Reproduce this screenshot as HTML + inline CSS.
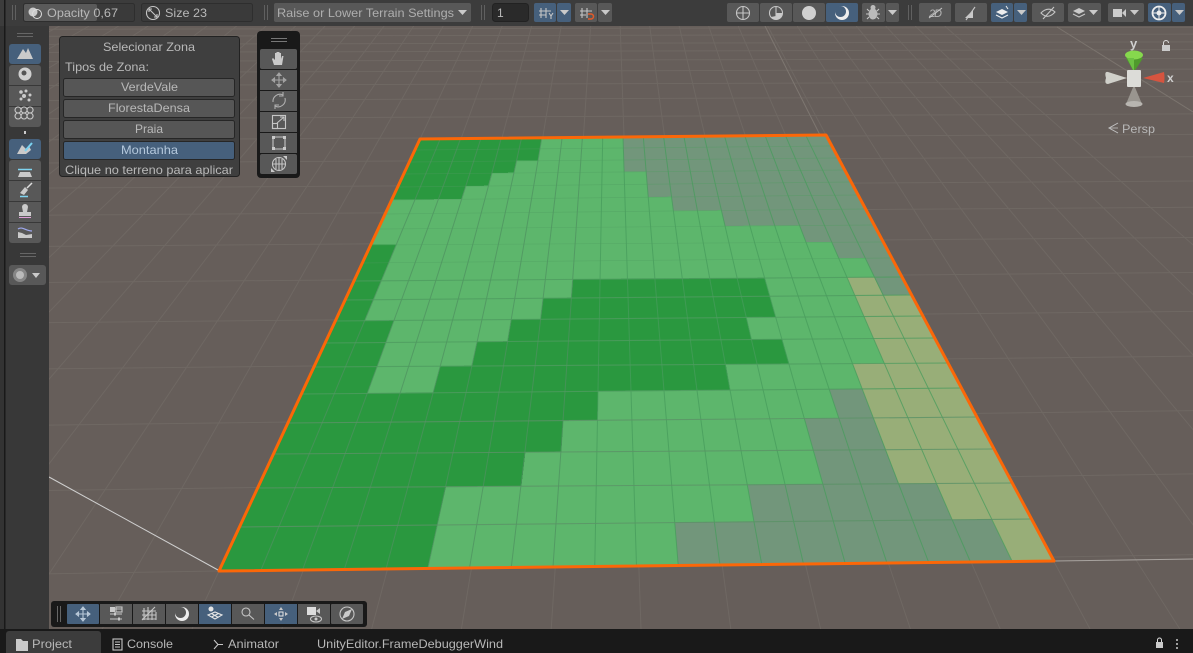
<!DOCTYPE html>
<html><head><meta charset="utf-8"><style>
html,body{margin:0;padding:0;background:#665e5a;width:1193px;height:653px;overflow:hidden}
svg{display:block;position:absolute;left:0;top:0}
text{font-family:"Liberation Sans",sans-serif;font-size:12px;fill:#b8b8b8}
.i{fill:none;stroke:#c6c6c6;stroke-width:1.1}
.f{fill:#cacaca;stroke:none}
</style></head><body>
<svg id="s" width="1193" height="653" viewBox="0 0 1193 653" xmlns="http://www.w3.org/2000/svg">
<rect width="1193" height="653" fill="#665e5a"/>
<g id="bg"></g>
<path d="M49 477L218 570" stroke="#cfcfcf" stroke-width="1" fill="none"/>
<path d="M1054 561L1193 559" stroke="#a8a39f" stroke-width="1" fill="none"/>
<path d="M765 26L820 135" stroke="#7d7670" stroke-width="1" fill="none"/>
<path d="M1057 27L1193 112" stroke="#7b746e" stroke-width="1" fill="none"/>
<g id="t" shape-rendering="crispEdges"></g>
<g id="l"></g>
<path d="M420 139L826 135L1054 561L219 571Z" fill="none" stroke="#fb6708" stroke-width="3" stroke-linejoin="round"/>

<!-- left strip -->
<rect x="0" y="0" width="49" height="629" fill="#383838"/>
<rect x="0" y="0" width="4" height="629" fill="#333"/>
<rect x="4" y="0" width="1.5" height="629" fill="#191919"/>
<path d="M17 33.5H33M17 36.5H33" stroke="#666" stroke-width="1"/>
<rect x="9" y="44" width="32" height="20" rx="3" fill="#46607c"/>
<rect x="9" y="65" width="32" height="62" rx="3" fill="#585858"/>
<path d="M9 85.5H41M9 106.5H41" stroke="#383838"/>
<rect x="24" y="131" width="2" height="3" fill="#ccc"/>
<rect x="9" y="139" width="32" height="20" rx="3" fill="#46607c"/>
<rect x="9" y="160" width="32" height="83" rx="3" fill="#585858"/>
<path d="M9 180.500H41M9 201.500H41M9 222.500H41" stroke="#383838"/>
<path d="M20 253.500H36M20 256.500H36" stroke="#666"/>
<rect x="9" y="265" width="37" height="20" rx="3" fill="#585858"/>
<circle cx="20" cy="275" r="7" fill="#a5a5a5" opacity=".6"/><circle cx="20" cy="275" r="4" fill="#c8c8c8" opacity=".8"/>
<path d="M32 273H40L36 278Z" class="f"/>
<path class="f" d="M17 59L23 49L26 53L28 48L33 59Z"/>
<circle cx="25" cy="74" r="6.500" fill="#d0d0d0"/><circle cx="24" cy="73" r="2.500" fill="#555"/>
<g class="f"><circle cx="21" cy="92" r="1.800"/><circle cx="26" cy="91" r="1.500"/><circle cx="30" cy="95" r="1.500"/><circle cx="24" cy="96" r="2"/><circle cx="29" cy="100" r="1.500"/><circle cx="21" cy="99" r="1.500"/></g>
<path class="i" stroke-width="1" d="M19 114a3 3 0 1 1 0.100 0zM25 114a3 3 0 1 1 .1 0zM31 114a3 3 0 1 1 .1 0zM19 120a3 3 0 1 1 .1 0zM25 120a3 3 0 1 1 .1 0zM31 120a3 3 0 1 1 .1 0z" transform="translate(-1 -1)"/>
<path class="f" d="M17 154L22 145L26 149L29 146L31 150L26 154Z"/>
<path d="M32 143L25 151" stroke="#7ad2f0" stroke-width="2"/>
<path d="M18 169.500H32" stroke="#7fd4f0" stroke-width="1.500"/><path class="f" d="M18 177L20 172H30L32 177Z"/>
<path class="f" d="M20 193L25 187L28 190L24 195Z"/><path d="M27 188L32 183" stroke="#ddd" stroke-width="1.500"/><path d="M20 196.500H28" stroke="#7fd4f0" stroke-width="1.500"/>
<path class="f" d="M22 207a3 3 0 1 1 6 0L27 212H31V216H19V212H23Z"/><path d="M19 217.500H31" stroke="#e0a0d8" stroke-width="1"/>
<path d="M18 229C22 226 26 231 32 231" stroke="#9ea8ee" fill="none" stroke-width="1.200"/><path class="f" d="M18 238V232L22 233L26 235L32 234V238Z"/>

<!-- top toolbar -->
<rect x="0" y="0" width="1193" height="26" fill="#3c3c3c"/>
<rect x="4" y="0" width="1.500" height="26" fill="#191919"/>
<path d="M12.500 5V20M15.500 5V20M264.500 5V20M267.500 5V20M481.500 5V20M484.500 5V20M908.500 5V20M911.500 5V20" stroke="#606060"/>
<rect x="23.500" y="3.500" width="111" height="18" rx="2" fill="#3a3a3a" stroke="#2e2e2e"/>
<rect x="24" y="4" width="73" height="17" rx="2" fill="#5a5a5a"/>
<circle cx="33" cy="12" r="4.500" fill="#ccc"/><circle cx="37" cy="14" r="4.500" fill="none" stroke="#ddd"/>
<text x="47" y="17" textLength="71" lengthAdjust="spacingAndGlyphs">Opacity 0,67</text>
<rect x="141.500" y="3.500" width="111" height="18" rx="2" fill="#3a3a3a" stroke="#2e2e2e"/>
<circle cx="153" cy="13" r="6.500" class="i"/><path class="i" d="M149 9L157 17M149 9H152M149 9V12M157 17H154M157 17V14"/>
<text x="165" y="17" textLength="42" lengthAdjust="spacingAndGlyphs">Size 23</text>
<rect x="274" y="3" width="197" height="19" rx="2" fill="#585858"/>
<text x="277" y="17" textLength="177" lengthAdjust="spacingAndGlyphs" style="fill:#aeaeae">Raise or Lower Terrain Settings</text>
<path d="M458 10H467L462.500 15Z" class="f"/>
<rect x="492.500" y="3.500" width="36" height="18" rx="3" fill="#2a2a2a" stroke="#222"/>
<text x="497" y="17">1</text>
<rect x="534" y="3" width="22" height="19" rx="2" fill="#46607c"/><rect x="557" y="3" width="14" height="19" rx="2" fill="#46607c"/>
<path class="i" d="M541 8V18M546 8V18M539 11H551M539 15H546M549 13L551 16L553 13M551 16V19"/>
<path d="M560 10H569L564.500 15Z" class="f"/>
<rect x="575" y="3" width="22" height="19" rx="2" fill="#585858"/><rect x="598" y="3" width="14" height="19" rx="2" fill="#585858"/>
<path class="i" stroke="#bbb" d="M582 8V18M587 8V18M580 11H592M580 15H586"/>
<path d="M588 19H591A2.500 2.500 0 0 0 591 14H588" fill="none" stroke="#e65a28" stroke-width="1.500"/>
<path d="M601 10H610L605.500 15Z" class="f"/>

<rect x="727" y="3" width="32" height="19" rx="2" fill="#585858"/><rect x="760" y="3" width="32" height="19" rx="2" fill="#585858"/><rect x="793" y="3" width="32" height="19" rx="2" fill="#585858"/><rect x="826" y="3" width="32" height="19" rx="2" fill="#46607c"/>
<circle cx="743" cy="13" r="6.500" class="i"/><path class="i" d="M736.500 13H749.500M743 6.500V19.500"/>
<circle cx="776" cy="13" r="6.500" class="i"/><path class="f" d="M776 13H782A6 6 0 0 1 771 17L776 16Z"/><path class="i" d="M776 6.500V19"/>
<circle cx="809" cy="13" r="7" fill="#d0d0d0"/>
<circle cx="842" cy="13" r="7" fill="#eee"/><circle cx="840.500" cy="11.500" r="5.500" fill="#46607c"/>
<rect x="862" y="3" width="23" height="19" rx="2" fill="#585858"/><rect x="886" y="3" width="13" height="19" rx="2" fill="#585858"/>
<ellipse cx="873" cy="14" rx="4.500" ry="5.500" fill="#bbb"/><circle cx="873" cy="7.500" r="2.500" fill="#bbb"/><path class="i" stroke="#bbb" d="M867 9L869 11M879 9L877 11M866 14H869M880 14H877M867 19L869 17M879 19L877 17"/>
<path d="M888 10H897L892.500 15Z" class="f"/>
<rect x="919" y="3" width="32" height="19" rx="2" fill="#585858"/><rect x="955" y="3" width="32" height="19" rx="2" fill="#585858"/>
<text x="929" y="17" textLength="13" style="font-size:11px;font-style:italic">2D</text><path class="i" d="M929 18L942 8"/>
<path class="f" d="M965 18L973 10V18Z"/><path class="i" d="M966 20L975 7"/>
<rect x="991" y="3" width="22" height="19" rx="2" fill="#46607c"/><rect x="1014" y="3" width="13" height="19" rx="2" fill="#46607c"/>
<path style="fill:#eee" d="M996 12L1002 9L1008 12L1002 15Z"/><path class="i" style="stroke:#eee" d="M996 15L1002 18L1008 15"/><path d="M1006 6L1008 9" stroke="#eee"/>
<path d="M1017 10H1026L1021.500 15Z" class="f"/>
<rect x="1032" y="3" width="32" height="19" rx="2" fill="#585858"/>
<path class="i" stroke="#bbb" d="M1041 13Q1048 6 1055 12Q1048 20 1041 13ZM1043 19L1054 7"/>
<rect x="1068" y="3" width="33" height="19" rx="2" fill="#585858"/>
<path class="f" d="M1073 11L1079 8L1085 11L1079 14Z"/><path class="i" d="M1073 14L1079 17L1085 14"/>
<path d="M1089 10H1098L1093.500 15Z" class="f"/>
<rect x="1108" y="3" width="36" height="19" rx="2" fill="#585858"/>
<rect x="1113" y="9" width="9" height="8" fill="#ccc"/><path class="f" d="M1122 13L1126 9V17Z"/>
<path d="M1130 10H1139L1134.500 15Z" class="f"/>
<rect x="1148" y="3" width="23" height="19" rx="2" fill="#46607c"/><rect x="1172" y="3" width="13" height="19" rx="2" fill="#46607c"/>
<circle cx="1159" cy="13" r="6.500" fill="none" stroke="#eee" stroke-width="1.800"/><path d="M1152 13H1166M1159 6V20" stroke="#eee"/><circle cx="1159" cy="13" r="2.500" fill="#eee"/>
<path d="M1175 10H1184L1179.500 15Z" class="f"/>

<!-- window -->
<rect x="59.500" y="36.500" width="180" height="140" rx="3" fill="#3f3f3f" stroke="#222"/>
<text x="103" y="51" textLength="92" lengthAdjust="spacingAndGlyphs">Selecionar Zona</text>
<text x="65" y="71" textLength="84" lengthAdjust="spacingAndGlyphs">Tipos de Zona:</text>
<g stroke="#262626">
<rect x="63.500" y="78.500" width="171" height="18" rx="2" fill="#565656"/>
<rect x="63.500" y="99.500" width="171" height="18" rx="2" fill="#565656"/>
<rect x="63.500" y="120.500" width="171" height="18" rx="2" fill="#565656"/>
<rect x="63.500" y="141.500" width="171" height="18" rx="2" fill="#46607c"/>
</g>
<text x="121" y="91" textLength="57" lengthAdjust="spacingAndGlyphs">VerdeVale</text>
<text x="108" y="112" textLength="82" lengthAdjust="spacingAndGlyphs">FlorestaDensa</text>
<text x="135" y="133" textLength="28" lengthAdjust="spacingAndGlyphs">Praia</text>
<text x="121" y="154" textLength="57" lengthAdjust="spacingAndGlyphs" style="fill:#b4c8dc">Montanha</text>
<text x="65" y="174" textLength="168" lengthAdjust="spacingAndGlyphs">Clique no terreno para aplicar</text>

<!-- tools overlay -->
<rect x="257" y="31" width="43" height="147" rx="4" fill="#191919"/>
<path d="M271 38.500H287M271 41.500H287" stroke="#777"/>
<g fill="#585858">
<rect x="260" y="49" width="37" height="20" rx="2"/><rect x="260" y="70" width="37" height="20"/><rect x="260" y="91" width="37" height="20"/><rect x="260" y="112" width="37" height="20"/><rect x="260" y="133" width="37" height="20"/><rect x="260" y="154" width="37" height="20" rx="2"/>
</g>
<path class="f" d="M274 65L272 59L273 58L275 60V53H276.500V58V52H278V58V52H279.500V58V53H281V59L282 56H283.500L282 65Z"/>
<path class="i" style="stroke:#a4a4a4" d="M279 73V87M272 80H286M279 73L277 75.500H281ZM279 87L277 84.500H281ZM272 80L274.500 78V82ZM286 80L283.500 78V82Z"/>
<path class="i" style="stroke:#b0b0b0" d="M273 102A7 7 0 0 1 283 95M285 98A7 7 0 0 1 275 106M283 92V96H279M275 109V105H279"/>
<rect x="272.500" y="115.500" width="13" height="13" class="i"/><rect x="272.500" y="123.500" width="5" height="5" class="i"/><path class="i" d="M277 123L284 117M280 117H284V121"/>
<path class="i" d="M274 137H284M274 149H284M273 138V148M285 138V148"/><g class="f"><rect x="272" y="136" width="3" height="3"/><rect x="283" y="136" width="3" height="3"/><rect x="272" y="147" width="3" height="3"/><rect x="283" y="147" width="3" height="3"/></g>
<circle cx="279" cy="164" r="6.500" class="i"/><path class="i" d="M279 158V170M273 164H285M276 159V169M282 159V169"/><path class="f" d="M271 172L275 172L271 168ZM287 156L283 156L287 160Z"/>

<!-- gizmo -->
<path d="M1126 58 L1143 58 L1134 72 Z" fill="#4f9a2c"/>
<ellipse cx="1134" cy="55" rx="9" ry="4.500" fill="#86d84d"/>
<path d="M1127 58L1134 72L1134 58Z" fill="#6cc043"/>
<path d="M1106 78Q1104 71 1108 72L1127 78L1108 84Q1104 84 1106 78Z" fill="#d0d0ca"/>
<path d="M1164 72L1143 78L1164 83Q1165 78 1164 72Z" fill="#d6543f"/>
<path d="M1134 85L1126 104H1142Z" fill="#99958f"/><ellipse cx="1134" cy="104" rx="8.500" ry="3" fill="#b8b5b0"/>
<rect x="1127" y="70" width="14" height="17" rx="1" fill="#dcdcd8"/>
<text x="1130" y="48" style="font-size:13px;font-weight:bold;fill:#d0d0d0" textLength="9">y</text>
<text x="1167" y="82" style="font-size:12px;font-weight:bold;fill:#d0d0d0">x</text>
<path class="f" d="M1162 45H1170V51H1162Z"/><path d="M1163.500 45V43A2.500 2.500 0 0 1 1168.500 43" fill="none" stroke="#ddd"/>
<path d="M1118 123L1109 128L1118 133" fill="none" stroke="#c0c0c0" stroke-width="1"/>
<path d="M1109 128H1118" stroke="#c0c0c0" stroke-width=".8"/>
<text x="1122" y="133" textLength="33" lengthAdjust="spacingAndGlyphs">Persp</text>

<!-- bottom overlay -->
<rect x="51" y="601" width="316" height="26" rx="3" fill="#191919"/>
<path d="M57.500 606V622M60.500 606V622" stroke="#666"/>
<g>
<rect x="67" y="604" width="32" height="20" rx="1" fill="#46607c"/><rect x="100" y="604" width="32" height="20" fill="#585858"/><rect x="133" y="604" width="32" height="20" fill="#585858"/><rect x="166" y="604" width="32" height="20" fill="#585858"/><rect x="199" y="604" width="32" height="20" fill="#46607c"/><rect x="232" y="604" width="32" height="20" fill="#585858"/><rect x="265" y="604" width="32" height="20" fill="#46607c"/><rect x="298" y="604" width="32" height="20" fill="#585858"/><rect x="331" y="604" width="32" height="20" rx="1" fill="#585858"/>
</g>
<path class="i" style="stroke:#b8c8d8" d="M83 607V621M76 614H90M83 607L81 609.500H85ZM83 621L81 618.500H85ZM76 614L78.500 612V616ZM90 614L87.500 612V616Z"/>
<g><rect x="110" y="607" width="5" height="5" class="f"/><path class="i" d="M110 609H122M110 614H122M110 619H122"/><rect x="116" y="607" width="6" height="5" class="i"/><rect x="114" y="612.500" width="2" height="3" class="f"/><rect x="118" y="617.500" width="2" height="3" class="f"/></g>
<path class="i" d="M144 608V620M148 607V620M152 610V620M156 612V620M142 611H156M142 615H156M142 619H156M142 620L155 607" stroke-width="1"/>
<circle cx="182" cy="614" r="7" fill="#eee"/><circle cx="180.500" cy="612.500" r="5.500" fill="#585858"/>
<circle cx="211" cy="609" r="2.500" fill="#e6e6e6"/><path class="i" style="stroke:#e6e6e6" d="M208 615L215 612L222 615L215 619ZM211.500 613.500L218.500 617.500M218.500 613.500L211.500 617"/>
<circle cx="246" cy="612" r="4" class="i"/><path class="i" d="M249 615L254 619.500"/>
<rect x="279" y="612" width="4" height="4" fill="none" stroke="#e6e6e6"/><path class="f" d="M281 607L279 610H283ZM281 621L279 618H283ZM274 614L277 612V616ZM288 614L285 612V616Z"/>
<rect x="307" y="607" width="9" height="8" fill="#ddd"/><path class="f" d="M316 611L320 608V614Z"/><ellipse cx="316" cy="619" rx="5.500" ry="3" class="i"/><circle cx="316" cy="619" r="1.500" class="f"/>
<circle cx="347" cy="614" r="7" class="i"/><path class="f" d="M352 609L349 616L342 619L345 612Z"/>

<!-- tabs -->
<rect x="0" y="629" width="1193" height="24" fill="#191919"/>
<path d="M6 653V634a3 3 0 0 1 3-3H98a3 3 0 0 1 3 3V653Z" fill="#3c3c3c"/>
<path class="f" d="M16 639H21L23 641H28V651H16Z"/>
<text x="32" y="648" textLength="40" lengthAdjust="spacingAndGlyphs">Project</text>
<rect x="113" y="639" width="9" height="11" class="i"/><path class="i" d="M115 642H120M115 644.500H120M115 647H120" stroke-width="1"/>
<text x="127" y="648" textLength="46" lengthAdjust="spacingAndGlyphs">Console</text>
<path class="i" d="M214 640L218 644.500L214 649M218 644.500H223"/>
<text x="228" y="648" textLength="51" lengthAdjust="spacingAndGlyphs">Animator</text>
<text x="317" y="648" textLength="186" lengthAdjust="spacingAndGlyphs">UnityEditor.FrameDebuggerWind</text>
<rect x="1156" y="642" width="7" height="6" class="f"/><path d="M1157.500 642V640A2 2 0 0 1 1161.500 640V642" fill="none" stroke="#ddd"/>
<g class="f"><circle cx="1177" cy="640" r="1"/><circle cx="1177" cy="644" r="1"/><circle cx="1177" cy="648" r="1"/></g>
</svg>
<script>
var L=[139,150,162,174,187,200,214,229,245,263,281,300,321,343,367,394,423,454,488,527,571];
var R=[135,146,158,170,182,195,209,225,242,258,277,295,316,338,363,388,417,449,483,519,561];
var M=[
"DDDDDDLLLLGGGGGGGGGG",
"DDDDDDLLLLGGGGGGGGGG",
"DDDDDLLLLLGGGGGGGGGG",
"DDDDLLLLLLLGGGGGGGGG",
"DDDLLLLLLLLGGGGGGGGG",
"LLLLLLLLLLLLGGGGGGGG",
"LLLLLLLLLLLLLLGGGGGG",
"LLLLLLLLLLLLLLLLLGGG",
"DLLLLLLLLLLLLLLLLLGG",
"DLLLLLLLLLLLLLLLLLLG",
"DLLLLLLLDDDDDDDLLLSG",
"DLLLLLLDDDDDDDDLLLSS",
"DDLLLLDDDDDDDDLLLLSS",
"DDLLLDDDDDDDDDDLLLSS",
"DDLLDDDDDDDDDLLLLSSS",
"DDDDDDDDDLLLLLLLGSSS",
"DDDDDDDDLLLLLLLGGSSS",
"DDDDDDDLLLLLLLLGGSSS",
"DDDDDLLLLLLLLGGGGGSS",
"DDDDDLLLLLLGGGGGGGGS"];
var C={D:"#2a983f",L:"#5db66c",G:"#72967b",S:"#98ae78"};
function p(c,r){var yl=L[r],yr=R[r];var xl=420-(yl-139)*201/432,xr=826+(yr-135)*228/426;var f=c/20;return [xl+(xr-xl)*f,yl+(yr-yl)*f];}
var NS="http://www.w3.org/2000/svg";
function add(g,n,a){var e=document.createElementNS(NS,n);for(var k in a)e.setAttribute(k,a[k]);g.appendChild(e);}
var t=document.getElementById("t"),l=document.getElementById("l"),bg=document.getElementById("bg");
for(var r=0;r<20;r++)for(var c=0;c<20;c++){
 var a=p(c,r),b=p(c+1,r),d=p(c+1,r+1),e=p(c,r+1);
 add(t,"polygon",{points:[a,b,d,e].map(function(q){return q[0].toFixed(1)+","+q[1].toFixed(1)}).join(" "),fill:C[M[r][c]],stroke:C[M[r][c]],"stroke-width":"0.6"});
}
for(c=1;c<20;c++){var a0=p(c,0),a1=p(c,20);add(l,"line",{x1:a0[0],y1:a0[1],x2:a1[0],y2:a1[1],stroke:c<9?"#4f9160":"#479c5c","stroke-width":"1",opacity:".75"});}
for(r=1;r<20;r++){var b0=p(0,r),b1=p(20,r);add(l,"line",{x1:b0[0],y1:b0[1],x2:b1[0],y2:b1[1],stroke:r>15?"#5b9267":"#4f9c60","stroke-width":r>9?"1.1":"0.7",opacity:r>9?".8":".45"});}
var vx=610,vy=-269;
for(var k=-14;k<=16;k++){var xb=219+84*k,yb=571;var m=(xb-vx)/(yb-vy);var ytop=26;add(bg,"line",{x1:vx+m*(ytop-vy),y1:ytop,x2:vx+m*(660-vy),y2:660,stroke:"#6f6863","stroke-width":"1"});}
var H=[29,36,44,52,61,72,85,100,118,139,162,187,214,245,281,321,367,423,488,571];
H.forEach(function(y){var s=(10*(y-139)/432+4)/835;add(bg,"line",{x1:0,y1:y+s*219,x2:1193,y2:y-s*974,stroke:"#6f6863","stroke-width":"1"});});
</script>
</body></html>
